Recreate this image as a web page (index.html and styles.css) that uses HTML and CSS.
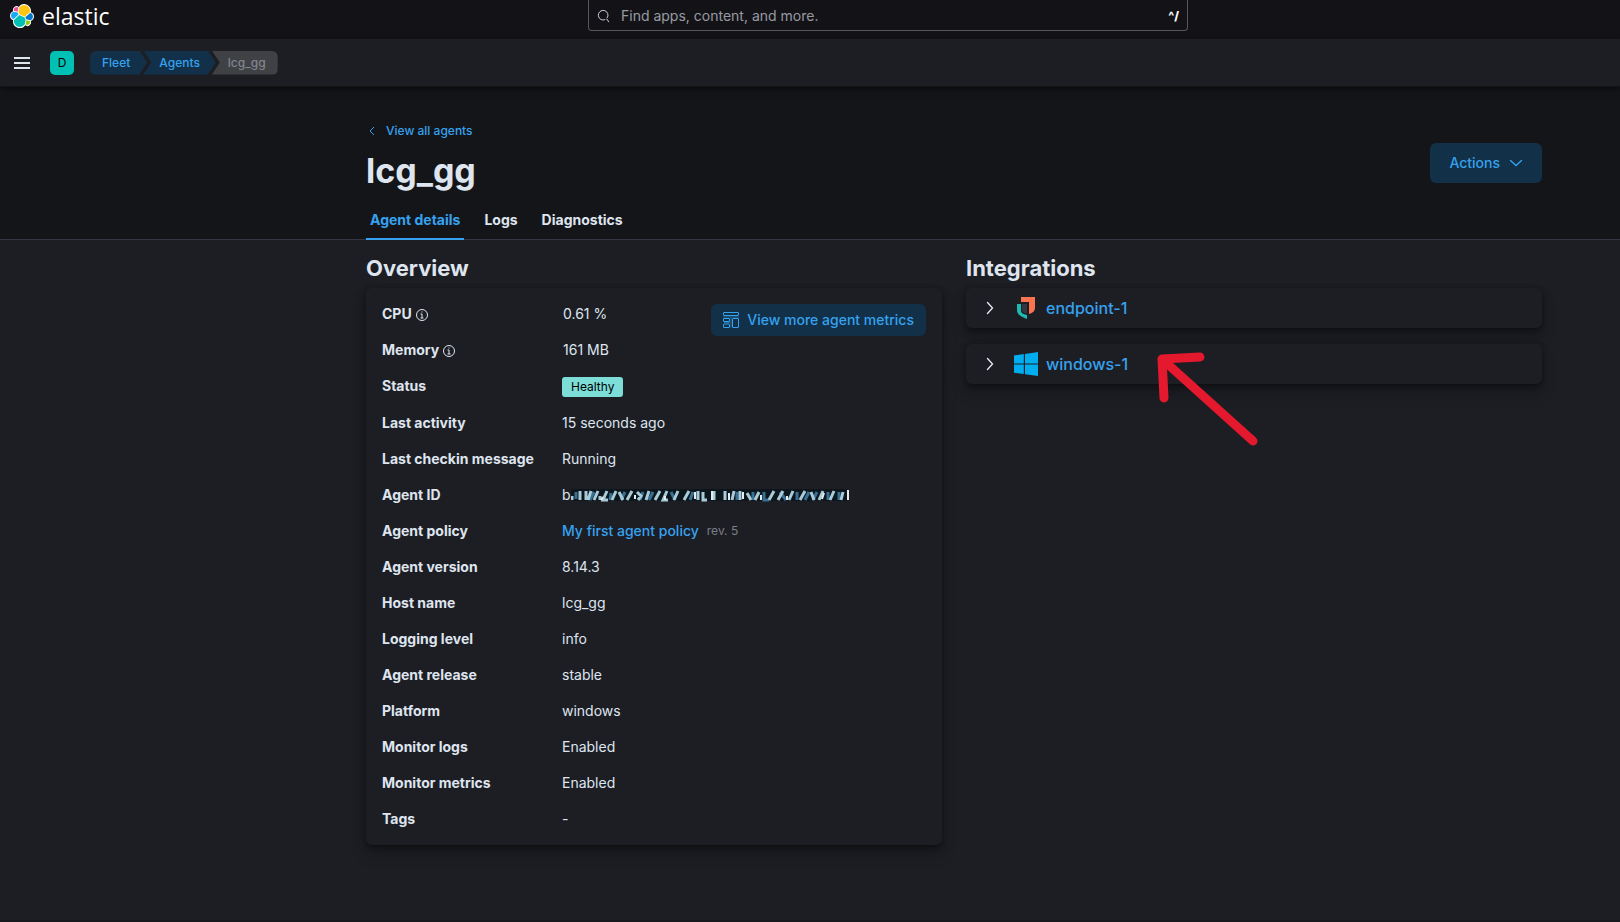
FILE: index.html
```html
<!DOCTYPE html>
<html lang="en">
<head>
<meta charset="utf-8">
<title>lcg_gg - Agents - Fleet - Elastic</title>
<link rel="stylesheet" href="styles.css">
</head>
<body>
<header class="topbar">
  <a class="brand" href="#" aria-label="Elastic home">
    <svg class="brand-mark" width="24" height="24" viewBox="0 0 32 32" aria-hidden="true">
      <path fill="#fff" d="M32 16.77a6.334 6.334 0 0 0-1.14-3.63 6.269 6.269 0 0 0-3.02-2.3 9.098 9.098 0 0 0-.87-5.82A9.05 9.05 0 0 0 22.67 1a9.005 9.005 0 0 0-11 2.87 4.793 4.793 0 0 0-5.8.05 4.84 4.84 0 0 0-1.6 5.62 6.383 6.383 0 0 0-3.09 2.33A6.43 6.43 0 0 0 0 15.57a6.345 6.345 0 0 0 4.22 5.97 9.062 9.062 0 0 0 5.21 9.9 9.007 9.007 0 0 0 10.9-3 4.775 4.775 0 0 0 5.79-.03 4.815 4.815 0 0 0 1.6-5.6 6.384 6.384 0 0 0 4.28-6.04"/>
      <path fill="#fec514" d="m12.58 13.79 7 3.21 7.07-6.21a7.849 7.849 0 0 0 .15-1.56 7.917 7.917 0 0 0-2.3-5.57 7.878 7.878 0 0 0-12.06 1.14l-1.18 6.1z"/>
      <path fill="#00bfb3" d="M5.33 21.21a7.97 7.97 0 0 0 .5 4.44 7.93 7.93 0 0 0 7.33 4.87 7.88 7.88 0 0 0 6.53-3.45l1.17-6.09-1.56-2.98-7.03-3.21z"/>
      <path fill="#f04e98" d="m5.29 9.07 4.8 1.14L11.14 4.74a3.785 3.785 0 0 0-5.85 4.33"/>
      <path fill="#1ba9f5" d="M4.87 10.22a5.354 5.354 0 0 0-3.59 5.04 5.34 5.34 0 0 0 3.4 4.97l6.73-6.09-1.23-2.64z"/>
      <path fill="#93c90e" d="M20.87 27.08a3.782 3.782 0 0 0 5.84-4.31l-4.79-1.12z"/>
      <path fill="#07c" d="m21.84 20.48 5.27 1.24a5.355 5.355 0 0 0 3.59-5.05 5.34 5.34 0 0 0-3.43-4.96l-6.9 6.04z"/>
    </svg>
    <span class="brand-name">elastic</span>
  </a>
  <label class="search">
    <svg width="14" height="14" viewBox="0 0 16 16" fill="none" stroke="currentColor" aria-hidden="true"><path d="M9.500 12a5.500 5.500 0 1 1 2-1.700M11 11l2.500 4"/></svg>
    <input type="text" placeholder="Find apps, content, and more." aria-label="Find apps, content, and more.">
    <kbd>^/</kbd>
  </label>
</header>
<nav class="navbar" aria-label="Breadcrumbs">
  <button class="menu-button" aria-label="Toggle primary navigation">
    <svg width="16" height="16" viewBox="0 0 16 16" fill="currentColor"><path d="M0 2h16v2H0zM0 7h16v2H0zM0 12h16v2H0z"/></svg>
  </button>
  <button class="space" aria-label="Default space">D</button>
  <div class="crumbs">
    <a class="crumb crumb-first" href="#">Fleet</a>
    <a class="crumb crumb-middle" href="#">Agents</a>
    <span class="crumb crumb-last" aria-current="page">lcg_gg</span>
  </div>
</nav>
<section class="page-header">
  <div class="title-row">
    <div>
      <a class="back" href="#">
        <svg width="12" height="12" viewBox="0 0 12 12" fill="none" stroke="currentColor" aria-hidden="true"><path d="M8 2 4 6l4 4"/></svg>
        View all agents
      </a>
      <h1>lcg_gg</h1>
    </div>
    <button class="button actions">Actions
      <svg width="16" height="16" viewBox="0 0 16 16" fill="none" stroke="currentColor" stroke-width="1.4" stroke-linecap="round" aria-hidden="true"><path d="m2.500 5.500 5.500 5 5.500-5"/></svg>
    </button>
  </div>
  <div class="tabs" role="tablist">
    <button class="tab tab-active" role="tab" aria-selected="true">Agent details</button>
    <button class="tab" role="tab">Logs</button>
    <button class="tab" role="tab">Diagnostics</button>
  </div>
</section>
<main class="columns">
  <section>
    <h2>Overview</h2>
    <div class="panel overview">
      <dl class="details">
        <dt>CPU <svg class="info" width="14" height="14" viewBox="0 0 14 14" fill="none" stroke="currentColor" aria-hidden="true"><circle cx="7" cy="7" r="5.500"/><path d="M5.500 6H7v4M5.500 10h3M6.500 4h1"/></svg></dt><dd class="metric">0.61 %</dd>
        <dt>Memory <svg class="info" width="14" height="14" viewBox="0 0 14 14" fill="none" stroke="currentColor" aria-hidden="true"><circle cx="7" cy="7" r="5.500"/><path d="M5.500 6H7v4M5.500 10h3M6.500 4h1"/></svg></dt><dd class="metric">161 MB</dd>
        <dt>Status</dt><dd><span class="badge">Healthy</span></dd>
        <dt>Last activity</dt><dd>15 seconds ago</dd>
        <dt>Last checkin message</dt><dd>Running</dd>
        <dt>Agent ID</dt><dd class="agent-id">b<svg width="280" height="14" viewBox="0 0 280 14" role="img" aria-label="Hidden identifier">
          <defs><filter id="smear" x="-5%" y="-20%" width="110%" height="140%"><feGaussianBlur stdDeviation="0.7"/></filter></defs>
          <rect y="1" width="278" height="12" rx="3" fill="#0c141c" filter="url(#smear)"/>
          <g fill="none" stroke-width="3" filter="url(#smear)">
            <path stroke="#386f94" d="M5 4v7M23 4l-4 8M40 5l-1 7M54 4l-4 8M72 4l-3 8M82 4l-4 8M100 4l4 8M122 4l-3 8M166 4v8M182 4v8M193 4v8h5M209 4l6 8M226 4v8M238 4l-4 8M246 4l-4 8M257 4v8M268 4v8"/>
            <path stroke="#a9cbd8" d="M1 8v4M9 3v9M15 3v9M20 3l-3 9M27 3l-4 9M29 8v4M36 3l-4 9h5M45 3l-4 9M48 4l4 8M61 3l-5 9M66 4l4 4-3 4M78 3l-3 9M89 3l-5 9M96 3l-4 9h5M107 3l-4 9M118 3l-5 9M127 3v9M132 4v8h4M143 3v9M154 3v9M163 3l-2 9M169 3v9M176 5l4 7M188 4l-4 8M203 3l-5 9M212 3l-5 9M222 3l-4 9M234 3l-5 9M240 4l3 8M252 3l-4 9M263 3l-4 9M272 4l-2 8"/>
            <path stroke="#e5edf0" stroke-width="2" d="M32 9l-2 3M64 7v4M94 8v4M124 4v7M141 3v9M158 5v7M172 4v7M190 7v5M216 8v4M253 5l-2 6M277 2v10"/>
          </g></svg></dd>
        <dt>Agent policy</dt><dd class="policy"><a href="#">My first agent policy</a><span class="revision">rev. 5</span></dd>
        <dt>Agent version</dt><dd>8.14.3</dd>
        <dt>Host name</dt><dd>lcg_gg</dd>
        <dt>Logging level</dt><dd>info</dd>
        <dt>Agent release</dt><dd>stable</dd>
        <dt>Platform</dt><dd>windows</dd>
        <dt>Monitor logs</dt><dd>Enabled</dd>
        <dt>Monitor metrics</dt><dd>Enabled</dd>
        <dt>Tags</dt><dd>-</dd>
      </dl>
      <a class="button metrics" href="#">
        <svg width="16" height="16" viewBox="0 0 16 16" fill="none" stroke="currentColor" aria-hidden="true"><rect x=".5" y=".5" width="15" height="3" rx=".5"/><path d="M0 5h16M8 6v9.500M1 10.500h6" opacity=".5"/><rect x=".5" y="6.500" width="6" height="3" rx=".5"/><rect x=".5" y="12" width="6" height="3.500" rx=".5"/><rect x="9.500" y="6.500" width="6" height="9" rx=".5"/></svg>
        View more agent metrics
      </a>
    </div>
  </section>
  <section>
    <h2>Integrations</h2>
    <div class="integrations">
      <div class="panel integration">
        <button class="expand" aria-label="Expand endpoint-1"><svg width="16" height="16" viewBox="0 0 16 16" fill="none" stroke="currentColor" stroke-width="1.4" stroke-linecap="round"><path d="m5.500 2.500 5 5.500-5 5.500"/></svg></button>
        <svg width="24" height="24" viewBox="0 0 24 24" aria-hidden="true"><path fill="#fa744e" d="M7 1h14v11c0 3-2 4.700-6 6V6H7z"/><path fill="#1dbab0" d="M3 8h4v7c0 2 2 3 6 4v4C6 20.500 3 18 3 14z"/><path fill="#343741" d="M8 8h5v9.500C9.500 17 8 16 8 14z"/></svg>
        <a href="#">endpoint-1</a>
      </div>
      <div class="panel integration">
        <button class="expand" aria-label="Expand windows-1"><svg width="16" height="16" viewBox="0 0 16 16" fill="none" stroke="currentColor" stroke-width="1.4" stroke-linecap="round"><path d="m5.500 2.500 5 5.500-5 5.500"/></svg></button>
        <svg width="24" height="24" viewBox="0 0 24 24" fill="#00adef" aria-hidden="true"><path d="m0 3.400 9.800-1.300v9.400H0zM11 1.900 24 0v11.400H11zM0 12.600h9.800V22L0 20.700zM11 12.600h13V24l-13-1.800z"/></svg>
        <a href="#">windows-1</a>
        <svg class="arrow" width="104" height="96" viewBox="0 0 104 96" fill="none" stroke="#e5192d" stroke-width="9" stroke-linecap="round" stroke-linejoin="round" aria-hidden="true"><path d="M44 5 6 7l2 39M6 7l91 82"/></svg>
      </div>
    </div>
  </section>
</main>
</body>
</html>
```
FILE: styles.css
```css
* { box-sizing: border-box; }
body {
  margin: 0;
  min-height: 100vh;
  background: #1d1e24;
  color: #dfe5ef;
  font: 14px/20px Inter, "Liberation Sans", sans-serif;
  border-bottom: 2px solid #18191e;
}
a { color: #36a2ef; font-weight: 500; text-decoration: none; }
button { font: inherit; color: inherit; border: 0; background: none; padding: 0; cursor: pointer; }
svg { flex: none; }
h1, h2, dl, dd { margin: 0; }

.topbar {
  display: grid;
  grid-template-columns: 578px minmax(200px, 600px) 1fr;
  height: 39px;
  padding: 0 10px;
  background: #131317;
}
.brand { display: flex; gap: 8px; align-items: center; height: 31px; color: #fff; }
.brand-name { font: 23px/28px "Open Sans", "Noto Sans", sans-serif; }
.search {
  display: flex;
  align-items: center;
  gap: 10px;
  height: 31px;
  padding: 1px 8px 0;
  border: 1px solid #56575d;
  border-top: 0;
  border-radius: 0 0 4px 4px;
}
.search input {
  flex: 1;
  min-width: 0;
  padding: 0;
  border: 0;
  background: none;
  color: inherit;
  font: inherit;
}
.search input::placeholder { color: #989aa2; opacity: 1; }
.search kbd { color: #fff; font: 800 12px/16px Inter, sans-serif; }

.navbar {
  display: flex;
  align-items: center;
  height: 48px;
  padding: 0 14px;
  background: #1d1e24;
  border-bottom: 1px solid #131317;
  box-shadow: 0 2px 6px rgba(0, 0, 0, .5);
  position: relative;
}
.menu-button { display: flex; }
.space {
  width: 24px;
  height: 24px;
  margin: 0 16px 0 20px;
  border-radius: 5px;
  background: #00bfb3;
  color: #000;
  font-size: 12px;
}
.crumbs { display: flex; font-size: 12px; }
.crumb { height: 24px; line-height: 24px; background: #12304a; color: #36a2ef; }
.crumb-first {
  padding: 0 17px 0 12px;
  border-radius: 6px 0 0 6px;
  clip-path: polygon(0 0, calc(100% - 8px) 0, 100% 50%, calc(100% - 8px) 100%, 0 100%);
}
.crumb-middle {
  margin-left: -4px;
  padding: 0 16px;
  clip-path: polygon(0 0, calc(100% - 8px) 0, 100% 50%, calc(100% - 8px) 100%, 0 100%, 8px 50%);
}
.crumb-last {
  margin-left: -4px;
  padding: 0 12px 0 16px;
  border-radius: 0 6px 6px 0;
  background: #404145;
  color: #81858f;
  font-weight: 500;
  clip-path: polygon(0 0, 100% 0, 100% 100%, 0 100%, 8px 50%);
}

.page-header {
  padding: 32px 78px 0 366px;
  background: #141519;
  border-bottom: 1px solid #343741;
}
.title-row { display: flex; justify-content: space-between; align-items: flex-end; }
.back { display: flex; align-items: center; gap: 8px; line-height: 24px; font-size: 12px; }
h1 { font-size: 34px; line-height: 40px; margin-top: 8px; }
.button {
  display: flex;
  align-items: center;
  gap: 8px;
  border-radius: 6px;
  background: #123047;
  color: #36a2ef;
  font-weight: 500;
}
.actions { height: 40px; margin-bottom: 8px; padding: 0 18px 0 19px; }
.tabs { display: flex; gap: 16px; margin-top: 8px; }
.tab { height: 41px; margin-bottom: -1px; padding: 1px 4px 0; font-weight: 700; }
.tab-active { color: #36a2ef; box-shadow: inset 0 -2px #36a2ef; }

.columns {
  display: grid;
  grid-template-columns: 1fr 1fr;
  gap: 24px;
  padding: 12px 78px 0 366px;
}
h2 { margin-bottom: 4px; font-size: 22px; line-height: 32px; font-weight: 700; }
.panel {
  border-radius: 6px;
  background: #1d1e24;
  box-shadow: 0 1px 4px rgba(0, 0, 0, .3), 0 4px 8px rgba(0, 0, 0, .25), 0 10px 16px rgba(0, 0, 0, .15);
}
.overview { display: flex; align-items: flex-start; justify-content: space-between; padding: 16px; }
.details { display: grid; grid-template-columns: 180px auto; row-gap: 16px; }
.details dt { font-weight: 700; white-space: nowrap; }
.metric { padding-left: 1px; }
.info { vertical-align: -3px; }
.badge {
  display: block;
  width: max-content;
  margin-top: 1px;
  padding: 0 9px;
  border-radius: 3px;
  background: #7dded8;
  color: #000;
  font-size: 12px;
  line-height: 20px;
}
.agent-id, .policy { display: flex; align-items: center; white-space: nowrap; margin-right: -200px; }
.revision { margin-left: 8px; color: #7a7e87; font-size: 12px; }
.metrics { height: 32px; padding: 0 12px; white-space: nowrap; }

.integrations { display: grid; gap: 16px; }
.integration { position: relative; display: flex; align-items: center; height: 40px; padding: 0 16px; font-size: 16px; }
.integration a { margin-left: 8px; }
.expand { display: flex; margin-right: 16px; }
.arrow { position: absolute; left: 190px; top: 8px; }
```
